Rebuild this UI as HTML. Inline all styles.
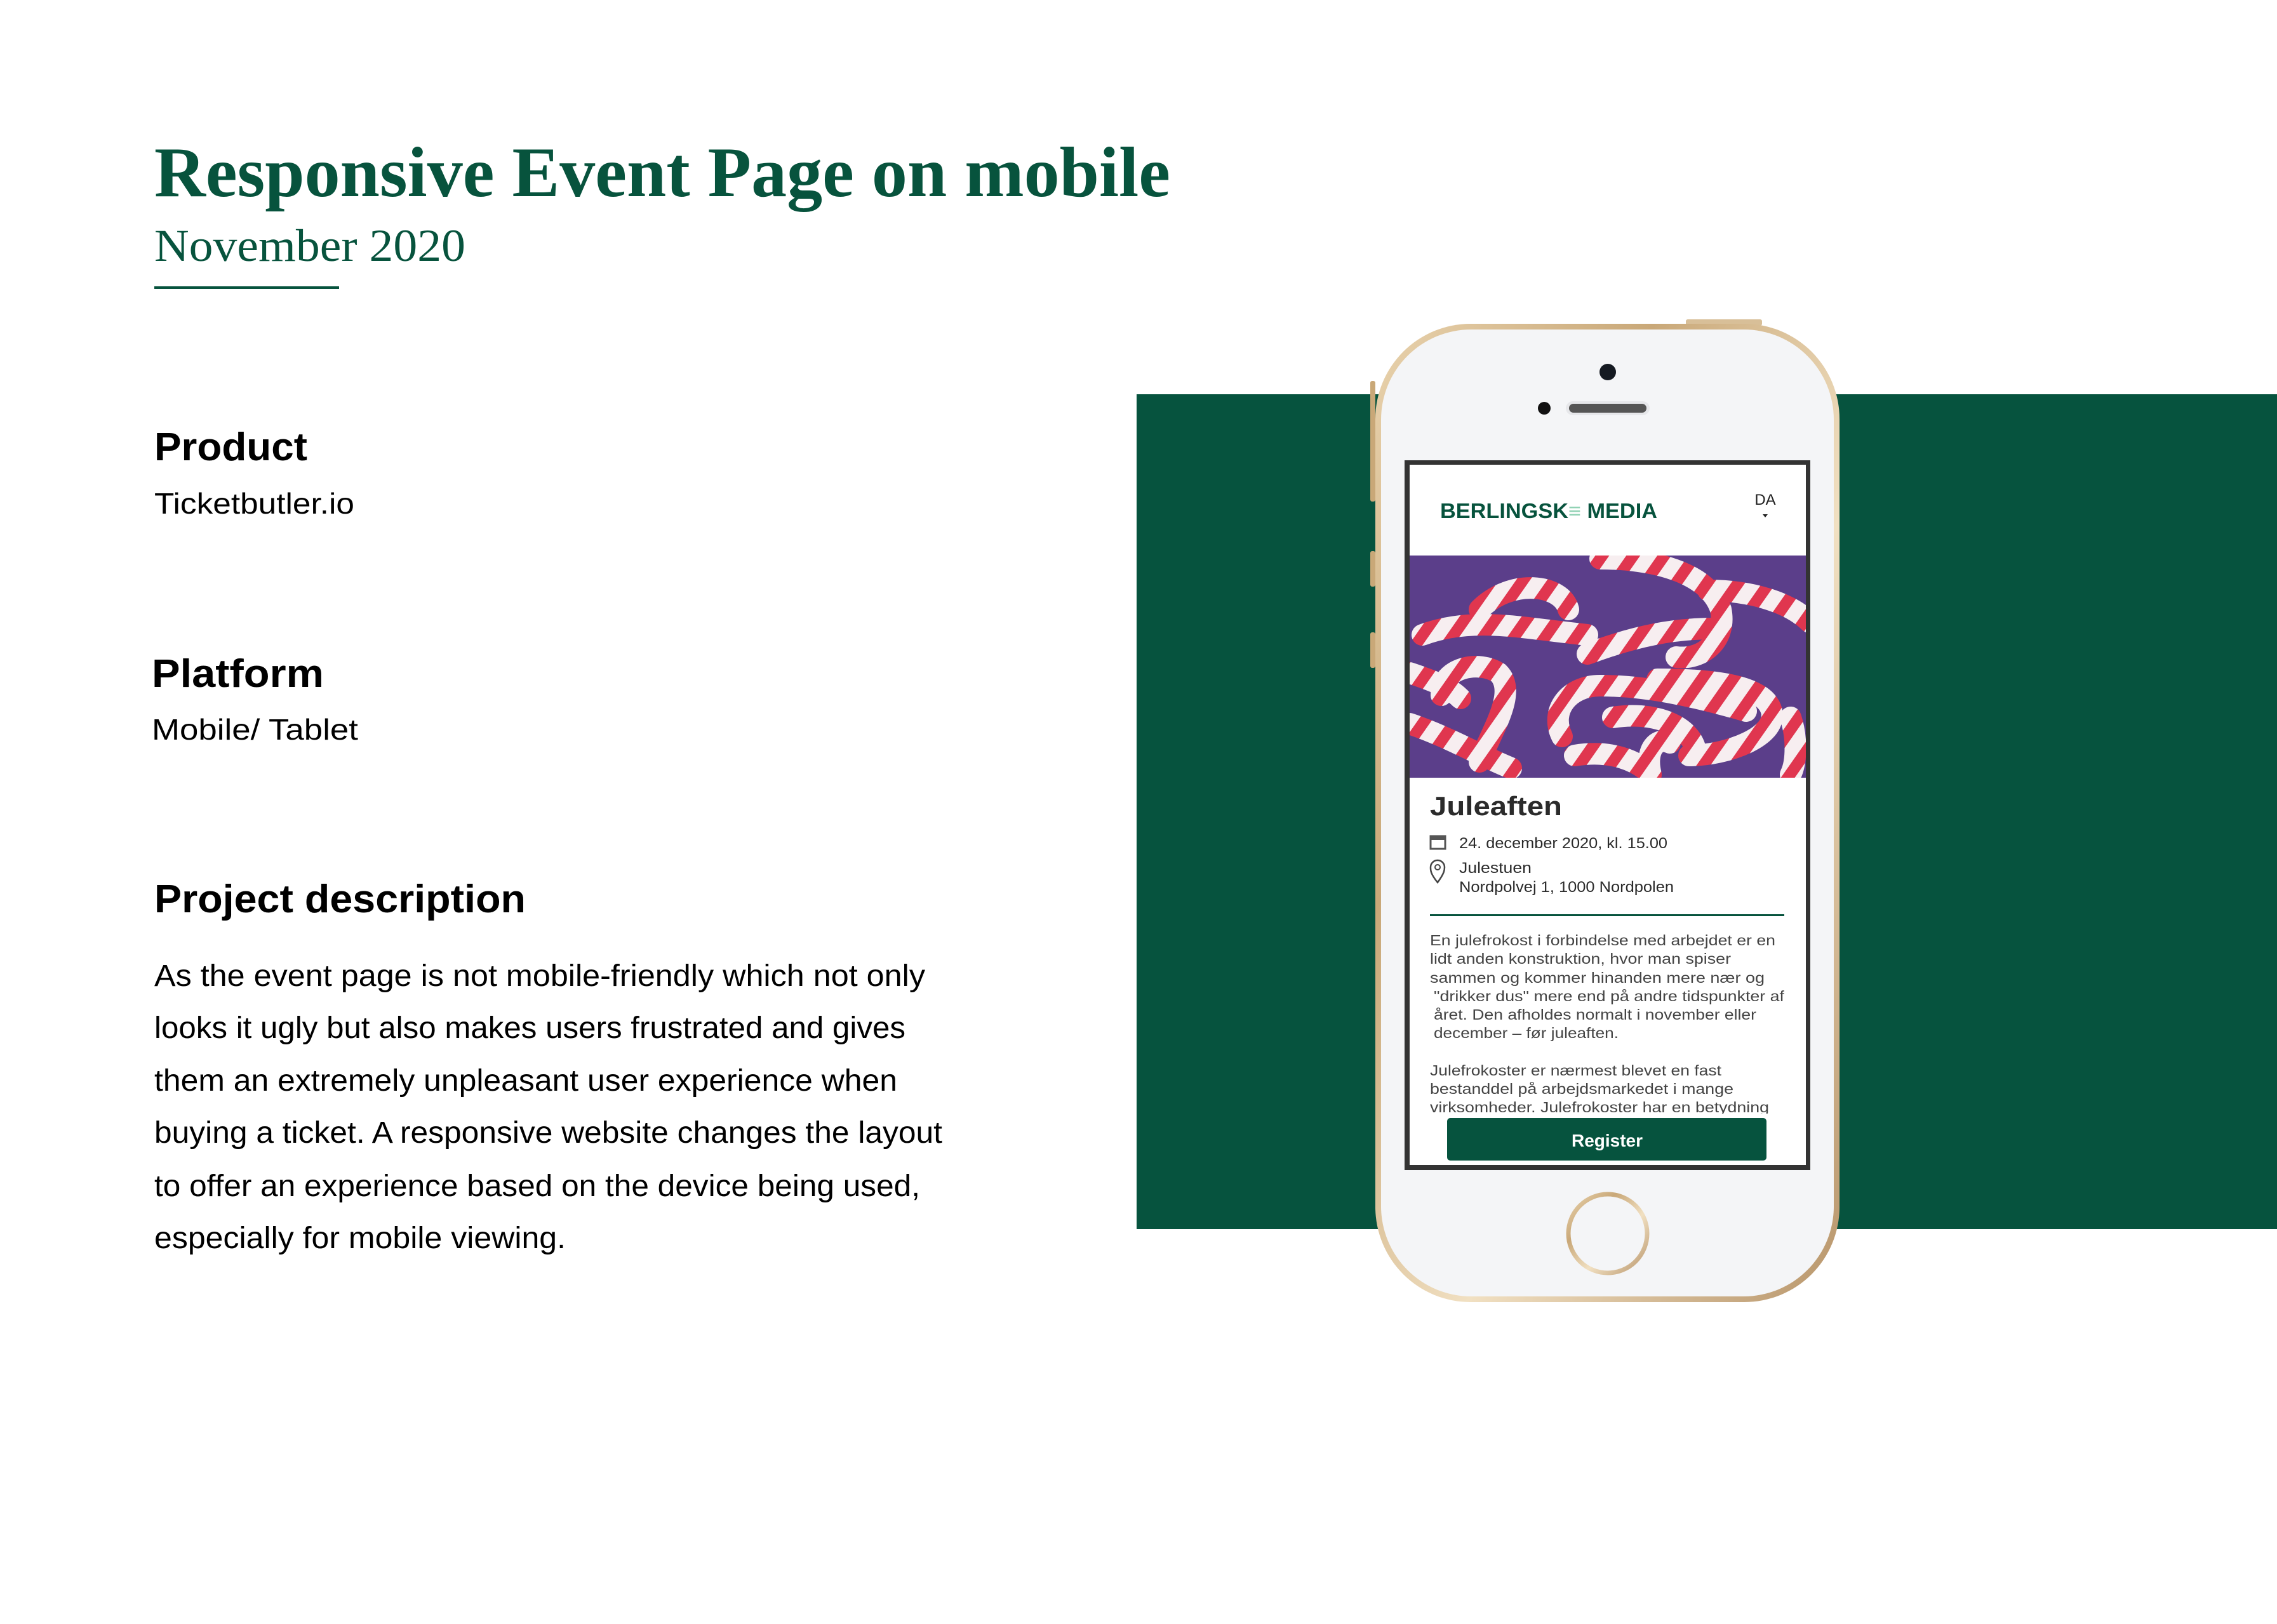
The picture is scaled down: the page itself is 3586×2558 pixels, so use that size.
<!DOCTYPE html>
<html><head><meta charset="utf-8"><style>html,body{margin:0;padding:0;background:#fff}svg{display:block}</style></head><body>
<svg width="3586" height="2558" viewBox="0 0 3586 2558" xmlns="http://www.w3.org/2000/svg">
<defs>
<linearGradient id="gold" x1="0" y1="0" x2="1" y2="1">
<stop offset="0" stop-color="#e9d3ae"/><stop offset="0.3" stop-color="#c9a878"/><stop offset="0.6" stop-color="#f1e0c2"/><stop offset="1" stop-color="#b8956a"/></linearGradient>
<pattern id="stripe" width="40" height="40" patternUnits="userSpaceOnUse" patternTransform="rotate(35)">
<rect width="40" height="40" fill="#f7eef0"/><rect width="18" height="40" fill="#e0364f"/></pattern>
<clipPath id="img"><rect x="2220" y="875" width="624" height="350"/></clipPath>
</defs>
<rect width="3586" height="2558" fill="#fff"/>
<text x="243" y="309" font-family="Liberation Serif" font-weight="bold" font-size="112" fill="#07533d" textLength="1600" lengthAdjust="spacingAndGlyphs">Responsive Event Page on mobile</text>
<text x="243" y="411" font-family="Liberation Serif" font-size="72" fill="#07533d" textLength="490" lengthAdjust="spacingAndGlyphs">November 2020</text>
<rect x="243" y="451" width="291" height="4" fill="#07533d"/>
<g font-family="Liberation Sans" fill="#000">
<text x="243" y="725" font-weight="bold" font-size="62" textLength="241" lengthAdjust="spacingAndGlyphs">Product</text>
<text x="243" y="809" font-size="46" textLength="315" lengthAdjust="spacingAndGlyphs">Ticketbutler.io</text>
<text x="239" y="1082" font-weight="bold" font-size="62" textLength="271" lengthAdjust="spacingAndGlyphs">Platform</text>
<text x="239" y="1165" font-size="46" textLength="325" lengthAdjust="spacingAndGlyphs">Mobile/ Tablet</text>
<text x="243" y="1437" font-weight="bold" font-size="62" textLength="585" lengthAdjust="spacingAndGlyphs">Project description</text>
<g font-size="48">
<text x="243" y="1553" textLength="1214" lengthAdjust="spacingAndGlyphs">As the event page is not mobile-friendly which not only</text>
<text x="243" y="1635" textLength="1183" lengthAdjust="spacingAndGlyphs">looks it ugly but also makes users frustrated and gives</text>
<text x="243" y="1718" textLength="1170" lengthAdjust="spacingAndGlyphs">them an extremely unpleasant user experience when</text>
<text x="243" y="1800" textLength="1241" lengthAdjust="spacingAndGlyphs">buying a ticket. A responsive website changes the layout</text>
<text x="243" y="1884" textLength="1206" lengthAdjust="spacingAndGlyphs">to offer an experience based on the device being used,</text>
<text x="243" y="1966" textLength="648" lengthAdjust="spacingAndGlyphs">especially for mobile viewing.</text>
</g></g>
<rect x="1790" y="621" width="1796" height="1315" fill="#06533e"/>
<!-- phone -->
<rect x="2158" y="600" width="8" height="190" rx="3" fill="#c9a878"/>
<rect x="2158" y="868" width="8" height="56" rx="3" fill="#c9a878"/>
<rect x="2158" y="996" width="8" height="56" rx="3" fill="#c9a878"/>
<rect x="2655" y="503" width="120" height="10" rx="3" fill="#d8bf98"/>
<rect x="2166" y="510" width="731" height="1541" rx="150" fill="url(#gold)"/>
<rect x="2175" y="519" width="713" height="1523" rx="142" fill="#f4f5f7"/>
<circle cx="2532" cy="586" r="13" fill="#151a22"/>
<circle cx="2432" cy="643" r="10" fill="#111"/>
<rect x="2466" y="632" width="132" height="22" rx="11" fill="#e6e7ea"/>
<rect x="2471" y="636" width="122" height="14" rx="7" fill="#555"/>
<circle cx="2532" cy="1943" r="62" fill="none" stroke="url(#gold)" stroke-width="7"/>
<!-- screen -->
<rect x="2212" y="725" width="639" height="1118" fill="#333"/>
<rect x="2220" y="732" width="624" height="1103" fill="#fff"/>
<text x="2268" y="816" font-family="Liberation Sans" font-weight="bold" font-size="33" fill="#07533d" textLength="342" lengthAdjust="spacingAndGlyphs">BERLINGSK<tspan fill="#8fd1b3">≡</tspan> MEDIA</text>
<text x="2780" y="795" text-anchor="middle" font-family="Liberation Sans" font-size="24" fill="#222">DA</text>
<path d="M2776 810 h8 l-4 5z" fill="#222"/>
<g clip-path="url(#img)">
<rect x="2220" y="875" width="624" height="350" fill="#5b3e8a"/>
<g fill="none" stroke="url(#stripe)" stroke-width="34" stroke-linecap="round">
<path d="M2330 960 C2380 910 2460 920 2470 960"/>
<path d="M2240 1000 C2320 970 2400 990 2500 1000"/>
<path d="M2520 880 C2600 880 2690 900 2710 960 C2720 1010 2680 1040 2640 1035"/>
<path d="M2500 1030 C2580 1000 2640 990 2700 990"/>
<path d="M2690 930 C2760 930 2820 950 2850 980"/>
<path d="M2270 1095 C2270 1050 2330 1040 2360 1060 C2390 1090 2350 1150 2330 1200"/>
<path d="M2220 1060 C2250 1070 2280 1080 2300 1100"/>
<path d="M2220 1140 C2280 1160 2330 1190 2380 1210"/>
<path d="M2460 1160 C2440 1120 2470 1080 2520 1080 C2600 1080 2680 1100 2750 1120"/>
<path d="M2610 1070 C2700 1070 2780 1080 2790 1120 C2800 1160 2720 1190 2660 1190"/>
<path d="M2540 1130 C2600 1120 2660 1140 2670 1180"/>
<path d="M2600 1220 C2590 1180 2610 1160 2630 1170"/>
<path d="M2480 1190 C2540 1180 2580 1200 2600 1220"/>
<path d="M2820 1130 C2830 1160 2830 1200 2820 1220"/>
</g></g>
<g font-family="Liberation Sans" fill="#2b2b2b">
<text x="2252" y="1284" font-weight="bold" font-size="42" textLength="208" lengthAdjust="spacingAndGlyphs">Juleaften</text>
<rect x="2253" y="1317" width="23" height="20" fill="none" stroke="#555" stroke-width="3"/>
<rect x="2253" y="1317" width="23" height="6" fill="#555"/>
<path d="M2264 1390 C2252 1375 2253 1370 2253 1366 a11 11 0 0 1 22 0 c0 4 0 9 -11 24z" fill="none" stroke="#444" stroke-width="2.5"/>
<circle cx="2264" cy="1366" r="4" fill="none" stroke="#444" stroke-width="2"/>
<g font-size="24">
<text x="2298" y="1336" textLength="328" lengthAdjust="spacingAndGlyphs">24. december 2020,  kl. 15.00</text>
<text x="2298" y="1375" textLength="114" lengthAdjust="spacingAndGlyphs">Julestuen</text>
<text x="2298" y="1405" textLength="338" lengthAdjust="spacingAndGlyphs">Nordpolvej 1, 1000 Nordpolen</text>
</g>
<rect x="2252" y="1440" width="558" height="3" fill="#07533d"/>
<g font-size="23" fill="#444">
<text x="2252" y="1489" textLength="544" lengthAdjust="spacingAndGlyphs">En julefrokost i forbindelse med arbejdet er en</text>
<text x="2252" y="1518" textLength="474" lengthAdjust="spacingAndGlyphs">lidt anden konstruktion, hvor man spiser</text>
<text x="2252" y="1548" textLength="527" lengthAdjust="spacingAndGlyphs">sammen og kommer hinanden mere nær og</text>
<text x="2258" y="1577" textLength="552" lengthAdjust="spacingAndGlyphs">"drikker dus" mere end på andre tidspunkter af</text>
<text x="2258" y="1606" textLength="508" lengthAdjust="spacingAndGlyphs">året. Den afholdes normalt i november eller</text>
<text x="2258" y="1635" textLength="291" lengthAdjust="spacingAndGlyphs">december – før juleaften.</text>
<text x="2252" y="1694" textLength="459" lengthAdjust="spacingAndGlyphs">Julefrokoster er nærmest blevet en fast</text>
<text x="2252" y="1723" textLength="478" lengthAdjust="spacingAndGlyphs">bestanddel på arbejdsmarkedet i mange</text>
<text x="2252" y="1752" textLength="534" lengthAdjust="spacingAndGlyphs">virksomheder. Julefrokoster har en betydning</text>
</g></g>
<rect x="2220" y="1754" width="624" height="8" fill="#fff"/>
<rect x="2279" y="1761" width="503" height="67" rx="5" fill="#06533e"/>
<text x="2531" y="1806" text-anchor="middle" font-family="Liberation Sans" font-weight="bold" font-size="28" fill="#fff">Register</text>
</svg>
</body></html>
